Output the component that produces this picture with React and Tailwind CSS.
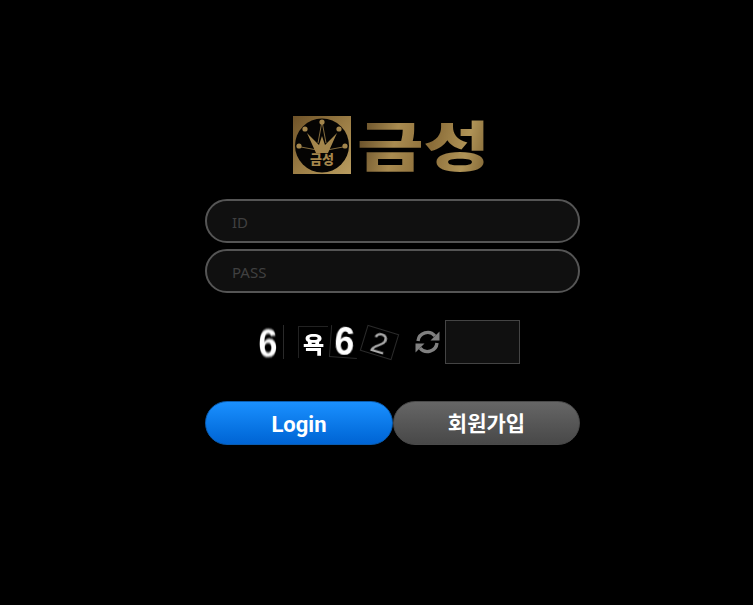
const uiFont = { fontFamily: '"Noto Sans", "Noto Sans CJK KR", sans-serif' };

const goldBg = 'bg-[linear-gradient(100deg,#5c4522_0%,#a98b50_30%,#8a6c38_55%,#b09457_80%,#7a5f30_100%)]';

function Emblem() {
    return (
        <svg width="58" height="58" viewBox="0 0 58 58" className="shrink-0">
            <defs>
                <linearGradient id="gold" x1="0" y1="0" x2="1" y2="1">
                    <stop offset="0" stopColor="#6e5228" />
                    <stop offset="0.5" stopColor="#9a7c44" />
                    <stop offset="1" stopColor="#b89c60" />
                </linearGradient>
            </defs>
            <rect width="58" height="58" fill="url(#gold)" />
            <circle cx="29" cy="29.5" r="27" fill="#050403" />
            <g fill="#a4864c">
                <circle cx="29" cy="6" r="2.6" />
                <circle cx="12" cy="13" r="2.6" />
                <circle cx="46" cy="13" r="2.6" />
                <circle cx="6" cy="30" r="2.6" />
                <circle cx="52" cy="30" r="2.6" />
                <path d="M14 17 L26 29 L29 20 L32 29 L44 17 L35 37 L23 37 Z" />
            </g>
            <path d="M28.5 8 L25 27 M29.5 8 L33 27 M8 31 L24 34 M50 31 L34 34" stroke="#a4864c" strokeWidth="0.8" fill="none" />
            <text x="29" y="47.5" textAnchor="middle" fontSize="13" fontWeight="900" fill="#a4864c" fontFamily="Noto Sans CJK KR, sans-serif">금성</text>
        </svg>
    );
}

function Captcha() {
    return (
        <div className="flex w-[146px] h-[36px] items-center text-white font-bold" style={{ fontFamily: '"Liberation Sans", "Noto Sans CJK KR", sans-serif' }}>
            <span className="w-[26px] h-[34px] pr-[5px] border-r border-[#2a2a2a] text-center">
                <span className="block text-[34px] leading-[36px] font-black blur-[0.7px] scale-y-[1.2]">6</span>
            </span>
            <span className="w-[30px] h-[32px] ml-[14px] border-t border-l border-[#222] text-[23px] leading-[32px] font-black text-center blur-[0.7px]" style={{ fontFamily: '"Noto Sans CJK KR", sans-serif' }}>욕</span>
            <span className="w-[28px] h-[32px] ml-[2px] border-l border-b border-[#2a2a2a] text-center rotate-[4deg]">
                <span className="block text-[36px] leading-[30px] blur-[0.6px] scale-y-[1.15]">6</span>
            </span>
            <span className="w-[33px] h-[27px] ml-[5px] border border-[#2b2b2b] text-[29px] leading-[27px] text-center text-[#aaa] font-normal blur-[0.5px] rotate-[17deg]">2</span>
        </div>
    );
}

function Refresh() {
    return (
        <svg width="25" height="24" viewBox="0 0 25 24" fill="none" stroke="#808080" strokeWidth="3.4">
            <path d="M3 11 A9.6 9.6 0 0 1 20 6" />
            <path d="M22 13 A9.6 9.6 0 0 1 5 18" />
            <path d="M24.5 1.5 V10.5 H15.5 Z" fill="#808080" stroke="none" />
            <path d="M0.5 22.5 V13.5 H9.5 Z" fill="#808080" stroke="none" />
        </svg>
    );
}

export default function App() {
    return (
        <div className="min-h-[605px] bg-black overflow-hidden pt-[116px] pl-[205px]" style={uiFont}>
            <div className="w-[375px] flex flex-col">
                <div className="flex items-center h-[58px] pl-[88px] gap-[6px]">
                    <Emblem />
                    <span
                        className={`${goldBg} bg-clip-text text-transparent text-[54px] leading-[58px] font-black origin-left scale-x-[1.34] -translate-y-[1px]`}
                        style={{ fontFamily: '"Noto Sans CJK KR", sans-serif' }}
                    >
                        금성
                    </span>
                </div>

                <div className="mt-[25px] flex flex-col gap-[6px]">
                    <input
                        placeholder="ID"
                        className="w-full h-[44px] rounded-[22px] border-2 border-[#555] bg-[#101010] pl-[25px] pt-[2px] text-[15px] outline-none placeholder:text-[#404040]"
                    />
                    <input
                        placeholder="PASS"
                        className="w-full h-[44px] rounded-[22px] border-2 border-[#555] bg-[#101010] pl-[25px] pt-[2px] text-[15px] outline-none placeholder:text-[#404040]"
                    />
                </div>

                <div className="mt-[27px] flex items-center h-[44px] pl-[53px]">
                    <Captcha />
                    <div className="ml-[11px] mr-[5px]"><Refresh /></div>
                    <input className="w-[75px] h-[44px] border border-[#444] bg-[#101010] outline-none" />
                </div>

                <div className="mt-[37px] flex">
                    <button className="w-[188px] h-[44px] pt-[2px] rounded-[22px] border border-[#0a5cb0] bg-gradient-to-b from-[#1a90ff] to-[#0064d4] text-white text-[22px] font-bold" style={{ fontFamily: '"Roboto", sans-serif' }}>
                        Login
                    </button>
                    <button className="w-[187px] h-[44px] rounded-[22px] border border-[#4a4a4a] bg-gradient-to-b from-[#666] to-[#484848] text-white text-[21px] font-bold" style={{ fontFamily: '"Noto Sans CJK KR", sans-serif' }}>
                        회원가입
                    </button>
                </div>
            </div>
        </div>
    );
}
